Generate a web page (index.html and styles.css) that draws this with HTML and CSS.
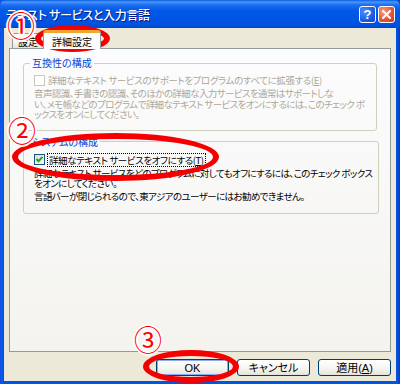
FILE: index.html
```html
<!DOCTYPE html>
<html lang="ja">
<head>
    <meta charset="UTF-8">
    <title>テキスト サービスと入力言語</title>
    <link rel="stylesheet" href="styles.css">
</head>
<body>
    <div class="window">
        <div class="titlebar">
            <span class="title">テキスト サービスと入力言語</span>
            <span class="capbtn help">?</span>
            <span class="capbtn close">
                <svg width="9" height="9" viewBox="0 0 9 9"><path d="M1 1L8 8M8 1L1 8" stroke="#fff" stroke-width="2" stroke-linecap="square"/></svg>
            </span>
        </div>
        <div class="client">
            <div class="tabs">
                <span class="tab">設定</span>
                <span class="tab active">詳細設定</span>
            </div>
            <div class="panel">
                <fieldset class="group off">
                    <legend>互換性の構成</legend>
                    <div class="check"><span class="box"></span><span>詳細なテキスト サービスのサポートをプログラムのすべてに拡張する(<u>E</u>)</span></div>
                    <p>音声認識、手書きの認識、そのほかの詳細な入力サービスを通常はサポートしな<br>い、メモ帳などのプログラムで詳細なテキスト サービスをオンにするには、このチェック ボ<br>ックスをオンにしてください。</p>
                </fieldset>
                <fieldset class="group sys">
                    <legend>システムの構成</legend>
                    <div class="check"><span class="box"><svg width="9" height="9" viewBox="0 0 9 9"><path d="M1.5 4L3.5 6.2L7.5 1.8" fill="none" stroke="#21a121" stroke-width="2"/></svg></span><span class="focus">詳細なテキスト サービスをオフにする(<u>T</u>)</span></div>
                    <p>詳細なテキスト サービスをどのプログラムに対してもオフにするには、このチェック ボックス<br>をオンにしてください。</p>
                    <p class="note">言語バーが閉じられるので、東アジアのユーザーにはお勧めできません。</p>
                </fieldset>
            </div>
            <div class="buttons">
                <button class="default">OK</button>
                <button>キャンセル</button>
                <button>適用(<u>A</u>)</button>
            </div>
        </div>

        <!-- 赤い丸の注釈 -->
        <div class="ring ring1"></div>
        <div class="ring ring2"></div>
        <div class="ring ring3"></div>
        <span class="num num1">①</span>
        <span class="num num2">②</span>
        <span class="num num3">③</span>
    </div>
</body>
</html>
```

FILE: styles.css
```css
* {
    box-sizing: border-box;
}

html,
body {
    margin: 0;
    padding: 0;
}

body {
    width: 400px;
    height: 384px;
    overflow: hidden;
    font-family: "Noto Sans CJK JP", sans-serif;
    font-size: 10px;
    font-feature-settings: "palt";
    color: #000;
}

.window {
    position: relative;
    width: 400px;
    height: 384px;
    display: flex;
    flex-direction: column;
    background: linear-gradient(to right, #0831d9 0, #166aee 1px, #0055e5 2px, #0055e5 397px, #0a3fc8 399px);
}

.titlebar {
    height: 28px;
    display: flex;
    align-items: center;
    padding: 0 5px 0 6px;
    border-radius: 6px 6px 0 0;
    background: linear-gradient(to bottom, #0a5de6 0, #4a96f8 2px, #1c6df0 5px, #0058e6 11px, #0055e5 20px, #0050db 26px, #0045c6 28px);
}

.title {
    flex: 1;
    color: #fff;
    font-size: 12px;
    font-weight: 500;
    letter-spacing: -0.3px;
    text-shadow: 1px 1px 0 #0a1883;
}

.capbtn {
    width: 17px;
    height: 17px;
    margin-left: 2px;
    display: flex;
    align-items: center;
    justify-content: center;
    border: 1px solid #fff;
    border-radius: 3px;
    color: #fff;
}

.help {
    background: radial-gradient(circle at 30% 30%, #4f8df7, #1a5ee8 60%, #0a45c8);
    font-family: "Liberation Sans", sans-serif;
    font-weight: bold;
    font-size: 13px;
    line-height: 1;
}

.close {
    background: radial-gradient(circle at 30% 30%, #f59b82, #e2583c 55%, #c83c1c);
}

.client {
    flex: 1;
    margin: 0 4px 3px 4px;
    background: #ece9d8;
    display: flex;
    flex-direction: column;
}

.tabs {
    height: 20px;
    display: flex;
    align-items: flex-end;
    padding-left: 8px;
}

.tab {
    height: 15px;
    width: 32px;
    padding-top: 1px;
    text-align: center;
    line-height: 13px;
    border: 1px solid #919b9c;
    border-bottom: none;
    border-radius: 3px 3px 0 0;
    background: linear-gradient(to bottom, #fff, #f3f3ef 60%, #e6e4dc);
}

.tab.active {
    width: 58px;
    height: 19px;
    margin-left: -1px;
    margin-bottom: -1px;
    position: relative;
    z-index: 1;
    line-height: 15px;
    border-top: 3px solid #f0a530;
    background: #fcfcfe;
}

.panel {
    height: 304px;
    margin: 0 5px 0 5px;
    border: 1px solid #919b9c;
    background: linear-gradient(to bottom, #fcfcfe, #f4f3ee);
    padding-top: 8px;
}

.group {
    margin: 0 13px 0 13px;
    padding: 0 6px 10px 10px;
    border: 1px solid #d0d0bf;
    border-radius: 3px;
}

.group + .group {
    margin-top: 5px;
}

.sys {
    padding-bottom: 12px;
}

.sys .check {
    margin-top: 6px;
}

legend {
    margin-left: -4px;
    padding: 0 2px;
    color: #0046d5;
    line-height: 12px;
}

.check {
    display: flex;
    align-items: center;
    margin-top: 5px;
    line-height: 12px;
    font-size: 9.5px;
    letter-spacing: -0.4px;
    white-space: nowrap;
}

.box {
    width: 11px;
    height: 11px;
    margin-right: 3px;
    display: flex;
    align-items: center;
    justify-content: center;
    border: 1px solid #1c5180;
    background: linear-gradient(135deg, #dcdcd7, #fff);
}

.focus {
    outline: 1px dotted #000;
    padding: 0 1px;
}

.group p {
    margin: 2px 0 0 0;
    font-size: 9.5px;
    letter-spacing: -0.6px;
    line-height: 10.5px;
    white-space: nowrap;
}

.group p.note {
    margin-top: 2px;
}

.off {
    color: #aca899;
}

.off legend {
    color: #0046d5;
}

.off .box {
    border-color: #cac8bb;
    background: #fff;
}

.buttons {
    display: flex;
    justify-content: flex-end;
    gap: 8px;
    margin: 7px 5px 0 0;
}

button {
    width: 73px;
    height: 17px;
    padding: 0;
    font-family: "Liberation Sans", "Noto Sans CJK JP", sans-serif;
    font-size: 11px;
    font-feature-settings: "palt";
    line-height: 14px;
    color: #000;
    border: 1px solid #003c74;
    border-radius: 3px;
    background: linear-gradient(to bottom, #fff, #f4f4f0 60%, #e3e2da);
}

button.default {
    box-shadow: inset 0 0 0 1px #89adf0;
}

/* 注釈 */
.ring {
    position: absolute;
    border: 6px solid #f40000;
    border-radius: 50%;
}

.ring1 {
    left: 35px;
    top: 25px;
    width: 75px;
    height: 27px;
}

.ring2 {
    left: 12px;
    top: 133px;
    width: 207px;
    height: 48px;
}

.ring3 {
    left: 143px;
    top: 350px;
    width: 96px;
    height: 33px;
}

.num {
    position: absolute;
    font-size: 28px;
    line-height: 28px;
    color: #f00;
    text-shadow: 1px 0 #fff, -1px 0 #fff, 0 1px #fff, 0 -1px #fff, 1px 1px #fff, -1px -1px #fff, 1px -1px #fff, -1px 1px #fff, 2px 0 #fff, -2px 0 #fff, 0 2px #fff, 0 -2px #fff;
    font-feature-settings: normal;
}

.num1 {
    left: 7px;
    top: 11px;
}

.num2 {
    left: 8px;
    top: 116px;
}

.num3 {
    left: 134px;
    top: 325px;
}
```
